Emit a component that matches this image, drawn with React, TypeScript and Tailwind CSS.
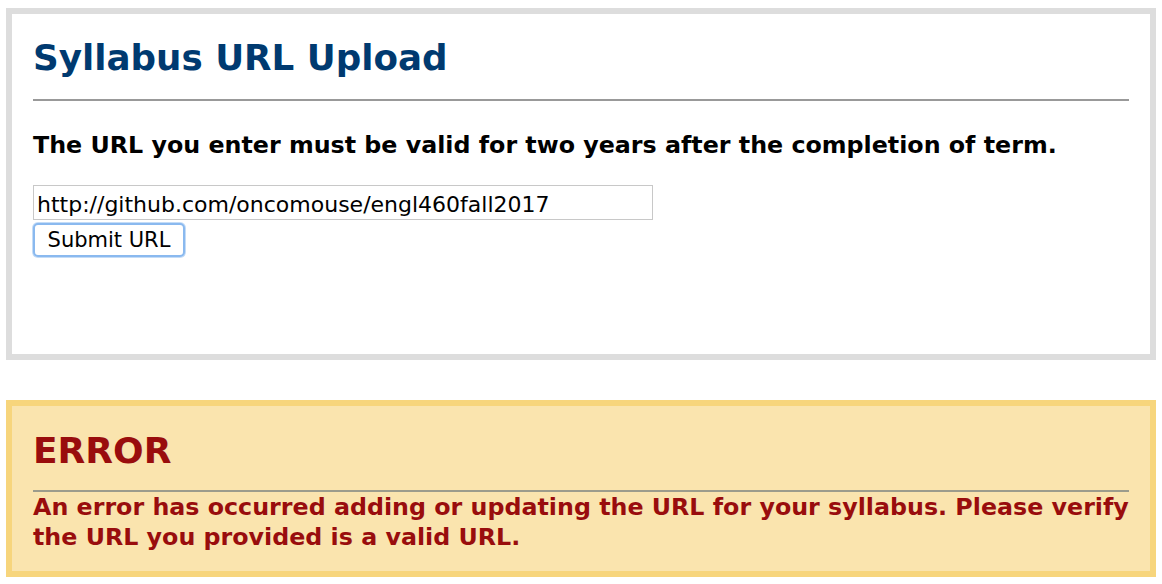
export default function App() {
  const verdana = "font-['DejaVu_Sans',Verdana,sans-serif]";
  return (
    <div className="bg-white px-[6px] pt-[8px] pb-[7px]">
      <section className="h-[352px] border-[6px] border-[#dddddd] bg-white px-[21px] pt-[22px]">
        <h1 className={`${verdana} text-[35.7px] font-bold leading-[44px] text-[#003a70]`}>
          Syllabus URL Upload
        </h1>
        <hr className="mt-[19px] border-0 border-t-2 border-[#999999]" />
        <p className={`${verdana} mt-[29px] text-[23.75px] font-bold leading-[30px] text-black`}>
          The URL you enter must be valid for two years after the completion of term.
        </p>
        <div className="mt-[25px] flex flex-col items-start gap-[3px]">
          <input
            type="text"
            defaultValue="http://github.com/oncomouse/engl460fall2017"
            className={`${verdana} h-[35px] w-[620px] border border-[#c8c8c8] px-[3px] pt-[3px] text-[22px] text-black outline-none`}
          />
          <button className={`${verdana} h-[34px] w-[152px] rounded-[5px] border-2 border-[#8ab9ef] bg-white text-[21px] leading-none text-black shadow-[0_0_0_1px_#c4dcf7]`}>
            Submit URL
          </button>
        </div>
      </section>
      <section className="mt-[40px] h-[177px] border-[6px] border-[#f7d57c] bg-[#fae4ae] px-[21px] pt-[25px]">
        <h2 className={`${verdana} text-[36px] font-bold leading-[40px] text-[#990d0d]`}>ERROR</h2>
        <hr className="mt-[19px] border-0 border-t-2 border-[#9c9c8c]" />
        <p className={`${verdana} text-[23.75px] font-bold leading-[30px] text-[#990d0d]`}>
          An error has occurred adding or updating the URL for your syllabus. Please verify the URL you provided is a valid URL.
        </p>
      </section>
    </div>
  );
}
